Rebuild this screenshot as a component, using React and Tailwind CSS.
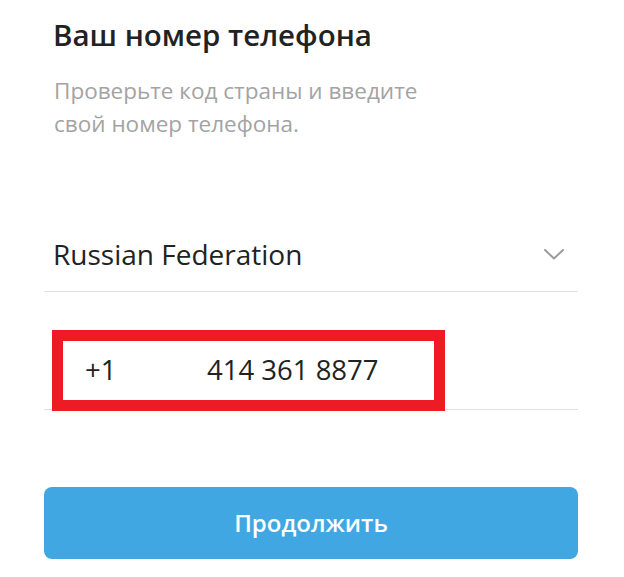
import React from "react";

function Chevron() {
  return (
    <svg width="20" height="11" viewBox="0 0 20 11" fill="none">
      <polyline points="1,1 10,9.5 19,1" stroke="#9b9b9b" strokeWidth="2" strokeLinecap="round" strokeLinejoin="round" />
    </svg>
  );
}

export default function App() {
  return (
    <div className="w-[624px] h-[577px] bg-white font-['Open_Sans',sans-serif] overflow-hidden">
      <div className="ml-[44px] w-[534px]">
        <h1 className="pt-[17px] pl-[9px] text-[29.5px] leading-[36px] font-semibold text-[#222222]">
          Ваш номер телефона
        </h1>
        <p className="mt-[21px] pl-[10px] text-[22.5px] leading-[33px] text-[#a3a3a3]">
          Проверьте код страны и введите
          <br />
          свой номер телефона.
        </p>

        <div className="mt-[96px] flex items-center justify-between border-b border-[#e1e1e1] pl-[9px] pr-[14px] pb-[19px]">
          <span className="text-[28px] leading-[36px] text-[#222222]">Russian Federation</span>
          <Chevron />
        </div>

        <div className="relative mt-[60px] flex border-b border-[#e1e1e1] pl-[41px] pb-[21px]">
          <span className="w-[122px] text-[27.5px] leading-[36px] text-[#222222]">+1</span>
          <span className="text-[27.5px] leading-[36px] text-[#222222]">414 361 8877</span>
          <div className="absolute -top-[22px] left-[8px] w-[393px] h-[81px] border-[11px] border-[#ed1c24]" />
        </div>

        <button className="mt-[77px] flex h-[72px] w-full items-center justify-center rounded-[8px] bg-[#40a7e3] text-[24px] font-semibold text-white">
          Продолжить
        </button>
      </div>
    </div>
  );
}
